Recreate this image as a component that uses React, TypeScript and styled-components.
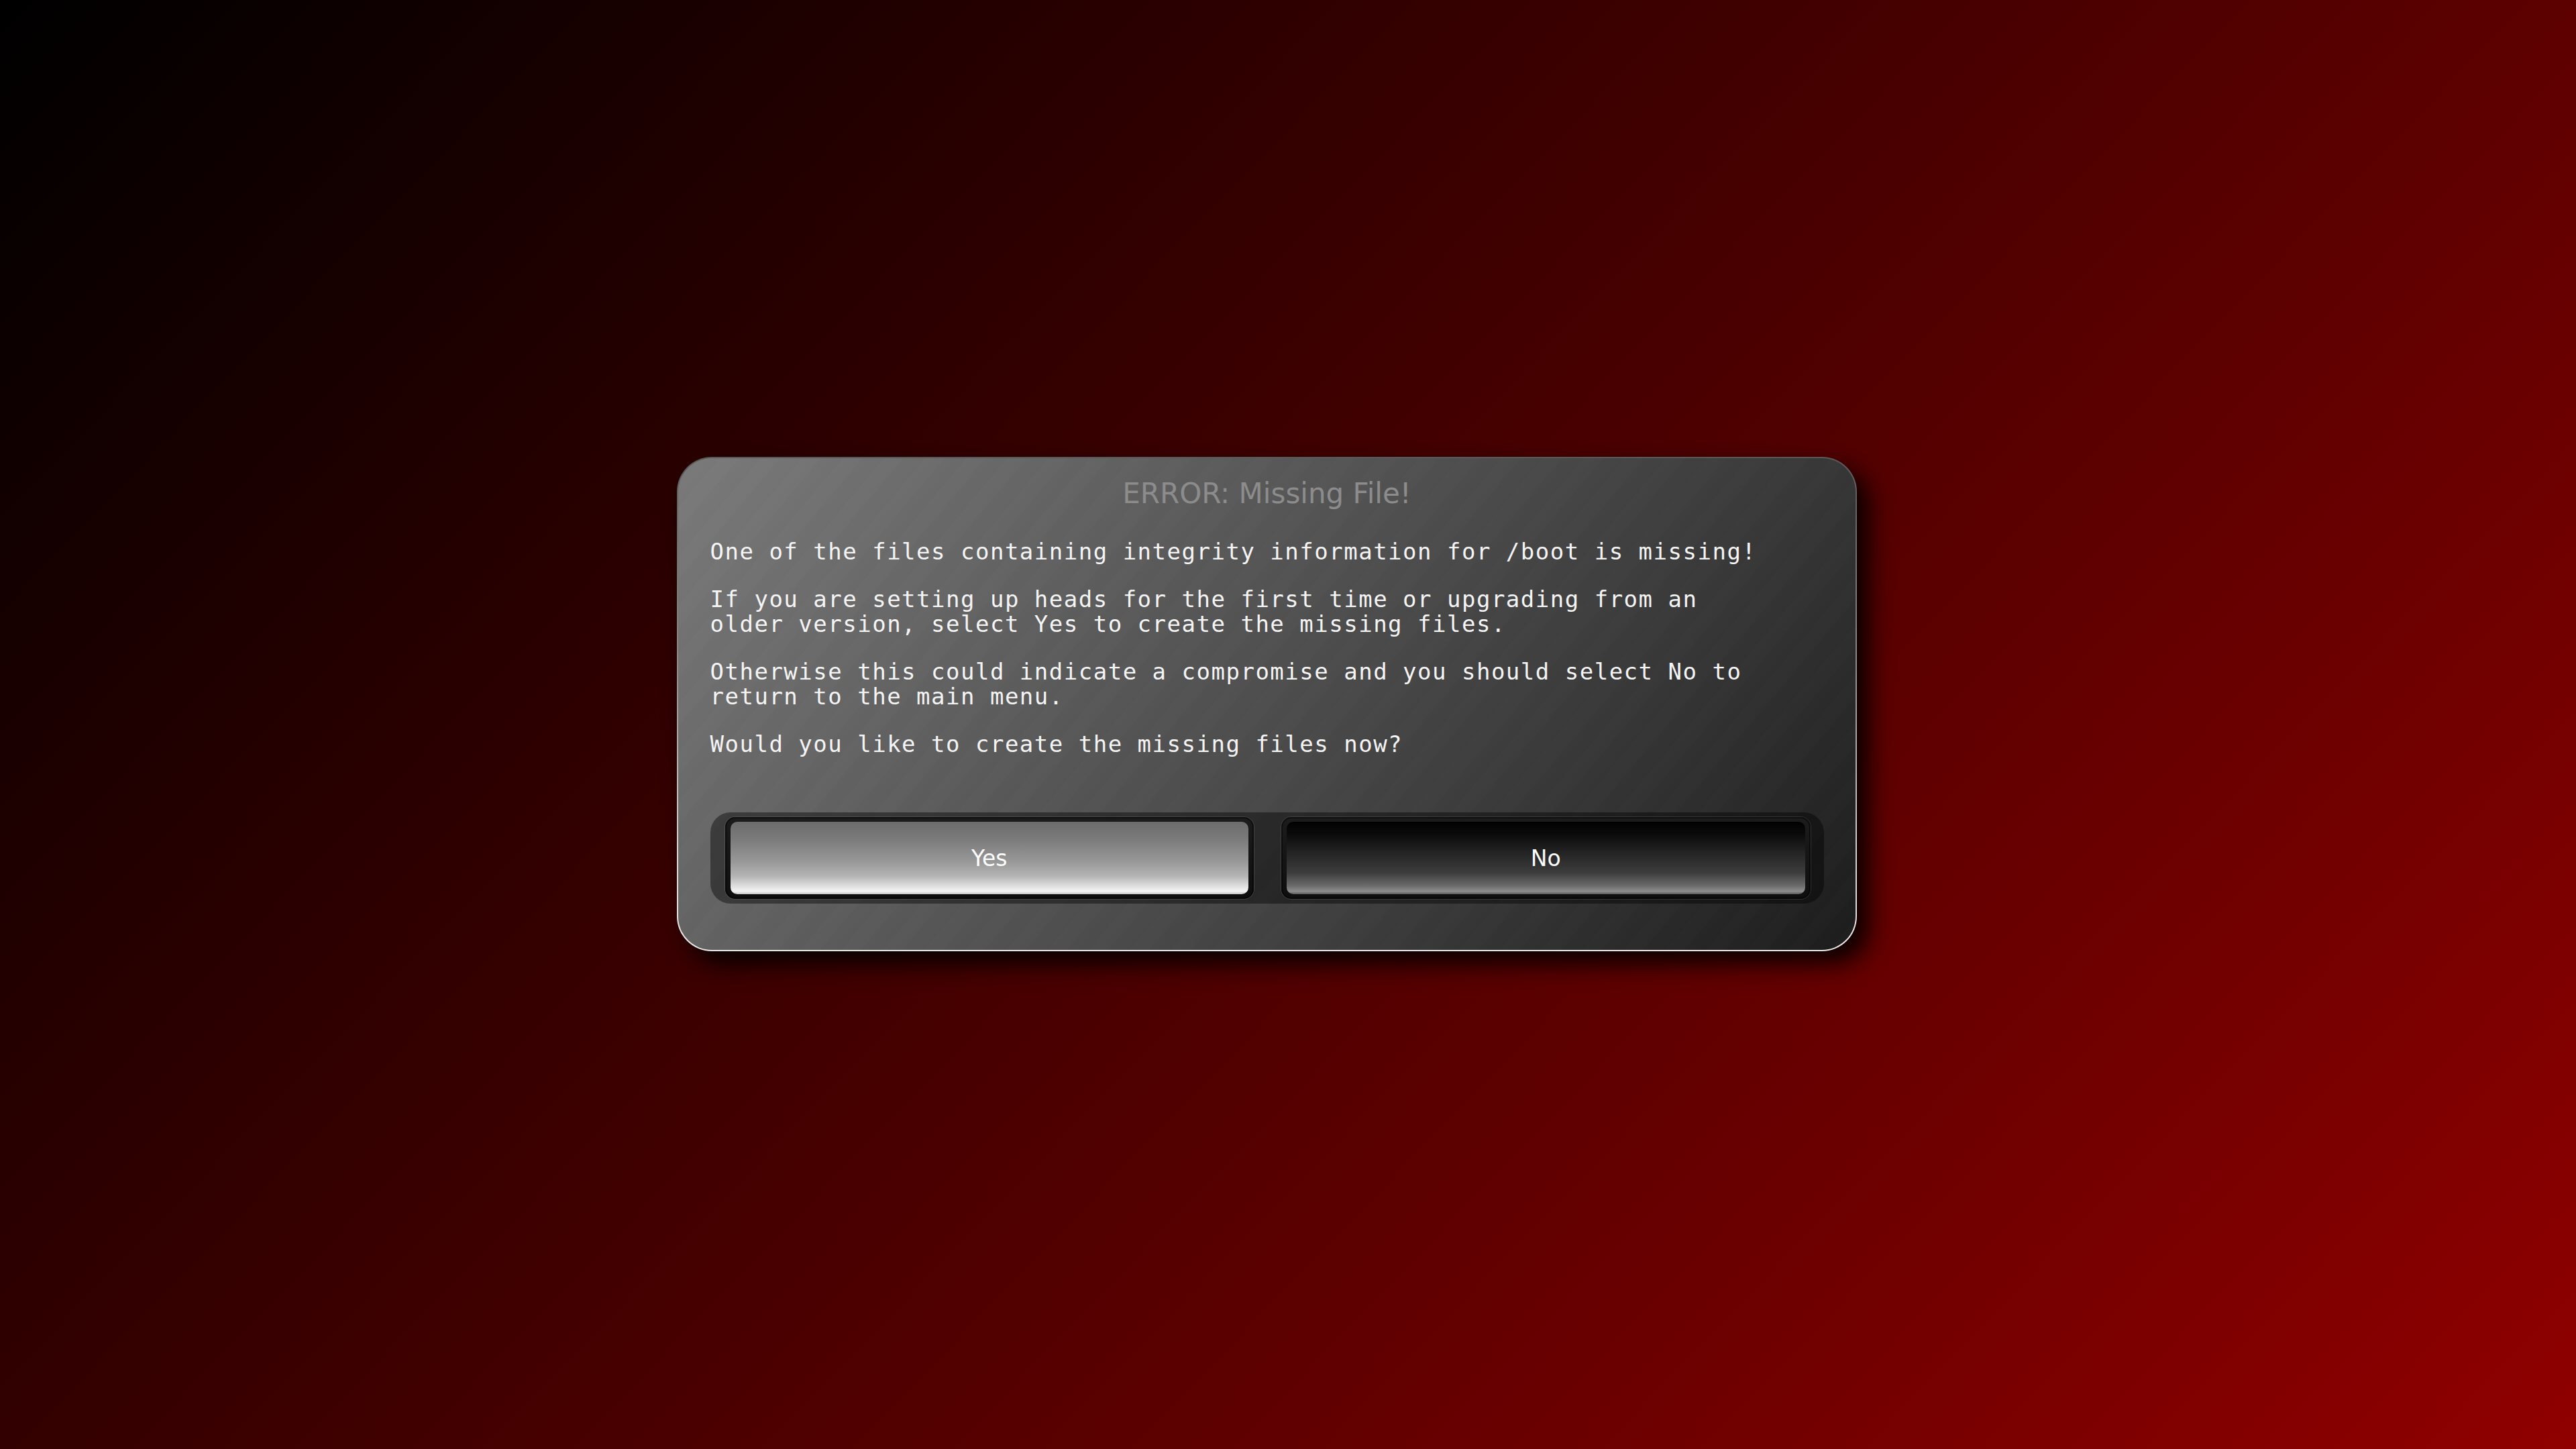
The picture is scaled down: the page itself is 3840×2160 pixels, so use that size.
import styled, { createGlobalStyle } from "styled-components";

const GlobalStyle = createGlobalStyle`
  html, body {
    margin: 0;
    padding: 0;
  }
  body {
    background: #000;
  }
`;

const Stage = styled.div`
  width: 3840px;
  height: 2160px;
  box-sizing: border-box;
  display: flex;
  align-items: center;
  justify-content: center;
  padding: 0 64px 61px 0;
  background: linear-gradient(134deg, #000000 0%, #900000 100%);
`;

const Dialog = styled.div`
  width: 1759px;
  box-sizing: border-box;
  border: 2px solid transparent;
  border-radius: 52px;
  padding: 32px 47px 69px 48px;
  display: flex;
  flex-direction: column;
  background:
    repeating-linear-gradient(
        130deg,
        rgba(255, 255, 255, 0.008) 0px,
        rgba(255, 255, 255, 0.008) 22px,
        rgba(0, 0, 0, 0.008) 22px,
        rgba(0, 0, 0, 0.008) 47px
      )
      padding-box,
    linear-gradient(130deg, #7b7b7b 0%, #4e4e4e 50%, #1c1c1c 100%) padding-box,
    linear-gradient(to bottom, #585858 0%, #8a8a8a 40%, #d6d6d6 80%, #e8e8e8 100%) border-box;
  box-shadow: 18px 18px 36px rgba(0, 0, 0, 0.9);
`;

const Title = styled.h1`
  margin: 0;
  font-family: "DejaVu Sans", "Liberation Sans", sans-serif;
  font-weight: normal;
  font-size: 42px;
  line-height: 42px;
  color: #8c8c8c;
  text-align: center;
`;

const Body = styled.div`
  margin-top: 47px;
  display: flex;
  flex-direction: column;
  gap: 34px;
`;

const Paragraph = styled.p`
  margin: 0;
  font-family: "DejaVu Sans Mono", "Liberation Mono", monospace;
  font-size: 34px;
  line-height: 37px;
  letter-spacing: 1.5px;
  color: #f4f4f4;
  white-space: pre;
`;

const Trough = styled.div`
  margin-top: 83px;
  display: flex;
  gap: 41px;
  padding: 7px 20px 7px 22px;
  border-radius: 30px;
  background: rgba(0, 0, 0, 0.42);
`;

const Well = styled.div`
  flex: 1;
  padding: 7px 8px;
  border-radius: 15px;
  background: linear-gradient(to bottom, #1c1c1c, #0e0e0e);
  box-shadow: 0 0 0 1px rgba(255, 255, 255, 0.12),
    inset 0 0 0 2px rgba(0, 0, 0, 0.5);
`;

const Face = styled.button<{ $selected?: boolean }>`
  width: 100%;
  height: 108px;
  display: flex;
  align-items: center;
  justify-content: center;
  border: none;
  border-radius: 10px;
  padding: 0;
  font-family: "DejaVu Sans", "Liberation Sans", sans-serif;
  font-size: 33px;
  color: #ffffff;
  cursor: pointer;
  background: ${(p) =>
    p.$selected
      ? "linear-gradient(to bottom, #6c6c6c 0%, #7c7c7c 25%, #989898 55%, #b4b4b4 75%, #dcdcdc 88%, #f4f4f4 96%, #c4c4c4 100%)"
      : "linear-gradient(to bottom, #000000 0%, #0c0c0c 18%, #262626 45%, #3c3c3c 70%, #6a6a6a 88%, #8e8e8e 96%, #5a5a5a 100%)"};
`;

const ChoiceButton = ({
  label,
  selected,
}: {
  label: string;
  selected?: boolean;
}) => (
  <Well>
    <Face $selected={selected}>{label}</Face>
  </Well>
);

export default function App() {
  return (
    <>
      <GlobalStyle />
      <Stage>
        <Dialog>
          <Title>ERROR: Missing File!</Title>
          <Body>
            <Paragraph>
              One of the files containing integrity information for /boot is
              missing!
            </Paragraph>
            <Paragraph>
              {"If you are setting up heads for the first time or upgrading from an\nolder version, select Yes to create the missing files."}
            </Paragraph>
            <Paragraph>
              {"Otherwise this could indicate a compromise and you should select No to\nreturn to the main menu."}
            </Paragraph>
            <Paragraph>Would you like to create the missing files now?</Paragraph>
          </Body>
          <Trough>
            <ChoiceButton label="Yes" selected />
            <ChoiceButton label="No" />
          </Trough>
        </Dialog>
      </Stage>
    </>
  );
}
